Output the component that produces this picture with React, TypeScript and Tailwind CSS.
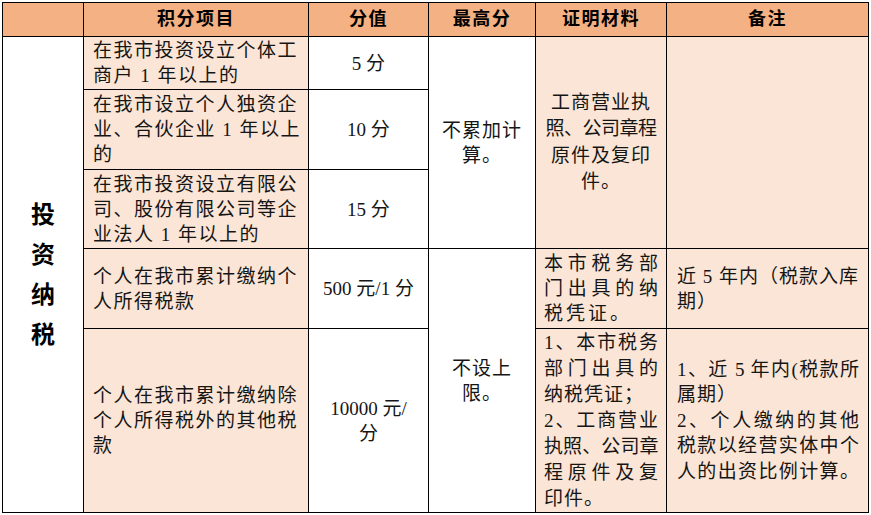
import clsx from 'clsx';
import type { ReactNode } from 'react';

const HEAD = 'bg-[#f4b183]';
const PEACH = 'bg-[#fbe5d6]';

function Ln({ children, j, className }: { children: ReactNode; j?: boolean; className?: string }) {
  return (
    <div className={clsx(j ? '[text-align-last:justify]' : 'whitespace-nowrap', className)}>
      {children}
    </div>
  );
}

const th = 'border border-black font-bold text-[18px] tracking-[1.5px] text-center text-black';
const td = 'border border-black align-middle';

export default function App() {
  return (
    <div className="bg-white w-[871px] h-[515px] pt-[2px] pl-[2px] font-['Liberation_Serif','Noto_Sans_CJK_SC',serif] text-[#151515]">
      <table className="table-fixed border-collapse w-[867px] text-[19px]">
        <colgroup>
          <col className="w-[81px]" />
          <col className="w-[225px]" />
          <col className="w-[120px]" />
          <col className="w-[107px]" />
          <col className="w-[131px]" />
          <col className="w-[202px]" />
        </colgroup>
        <thead>
          <tr className="h-[34px]">
            <th className={clsx(th, HEAD)}></th>
            <th className={clsx(th, HEAD)}>积分项目</th>
            <th className={clsx(th, HEAD)}>分值</th>
            <th className={clsx(th, HEAD)}>最高分</th>
            <th className={clsx(th, HEAD)}>证明材料</th>
            <th className={clsx(th, HEAD)}>备注</th>
          </tr>
        </thead>
        <tbody>
          {/* 投资设立 */}
          <tr className="h-[53px]">
            <td rowSpan={5} className={clsx(td, 'bg-white text-center text-[24px] font-bold leading-[40px] text-black')}>
              <div>投</div>
              <div>资</div>
              <div>纳</div>
              <div>税</div>
            </td>
            <td className={clsx(td, PEACH, 'pl-[9px] leading-[25px] tracking-[1.5px]')}>
              <Ln>在我市投资设立个体工</Ln>
              <Ln>商户 1 年以上的</Ln>
            </td>
            <td className={clsx(td, 'bg-white text-center leading-[25px]')}>5 分</td>
            <td rowSpan={3} className={clsx(td, 'bg-white text-center leading-[25px] tracking-[1px]')}>
              <Ln>不累加计</Ln>
              <Ln>算。</Ln>
            </td>
            <td rowSpan={3} className={clsx(td, PEACH, 'text-center leading-[26.5px] tracking-[1px]')}>
              <Ln>工商营业执</Ln>
              <Ln className="tracking-[-0.5px]">照、公司章程</Ln>
              <Ln>原件及复印</Ln>
              <Ln>件。</Ln>
            </td>
            <td rowSpan={3} className={clsx(td, PEACH)}></td>
          </tr>
          <tr className="h-[80px]">
            <td className={clsx(td, PEACH, 'pl-[9px] leading-[25px] tracking-[1.5px]')}>
              <Ln>在我市设立个人独资企</Ln>
              <Ln>业、合伙企业 1 年以上</Ln>
              <Ln>的</Ln>
            </td>
            <td className={clsx(td, 'bg-white text-center leading-[25px]')}>10 分</td>
          </tr>
          <tr className="h-[79px]">
            <td className={clsx(td, PEACH, 'pl-[9px] leading-[25px] tracking-[1.5px]')}>
              <Ln>在我市投资设立有限公</Ln>
              <Ln>司、股份有限公司等企</Ln>
              <Ln>业法人 1 年以上的</Ln>
            </td>
            <td className={clsx(td, 'bg-white text-center leading-[25px]')}>15 分</td>
          </tr>

          {/* 纳税 */}
          <tr className="h-[80px]">
            <td className={clsx(td, PEACH, 'pl-[9px] leading-[25px] tracking-[1.5px]')}>
              <Ln>个人在我市累计缴纳个</Ln>
              <Ln>人所得税款</Ln>
            </td>
            <td className={clsx(td, 'bg-white text-center leading-[25px]')}>500 元/1 分</td>
            <td rowSpan={2} className={clsx(td, 'bg-white text-center leading-[25px] tracking-[1px]')}>
              <Ln>不设上</Ln>
              <Ln>限。</Ln>
            </td>
            <td className={clsx(td, PEACH, 'px-[8px] leading-[25px]')}>
              <Ln j>本市税务部</Ln>
              <Ln j>门出具的纳</Ln>
              <Ln className="tracking-[3px]">税凭证。</Ln>
            </td>
            <td className={clsx(td, PEACH, 'pl-[10px] leading-[25px] tracking-[1px]')}>
              <Ln>近 5 年内（税款入库</Ln>
              <Ln>期）</Ln>
            </td>
          </tr>
          <tr className="h-[184px]">
            <td className={clsx(td, PEACH, 'pl-[9px] leading-[25px] tracking-[1.5px]')}>
              <Ln>个人在我市累计缴纳除</Ln>
              <Ln>个人所得税外的其他税</Ln>
              <Ln>款</Ln>
            </td>
            <td className={clsx(td, 'bg-white text-center leading-[25px]')}>
              <Ln>10000 元/</Ln>
              <Ln>分</Ln>
            </td>
            <td className={clsx(td, PEACH, 'px-[8px] leading-[26px]')}>
              <Ln j>1、本市税务</Ln>
              <Ln j>部门出具的</Ln>
              <Ln className="tracking-[1px]">纳税凭证；</Ln>
              <Ln j>2、工商营业</Ln>
              <Ln j className="tracking-[-0.5px]">执照、公司章</Ln>
              <Ln j>程原件及复</Ln>
              <Ln className="tracking-[1px]">印件。</Ln>
            </td>
            <td className={clsx(td, PEACH, 'pl-[10px] pr-[9px] leading-[25.5px]')}>
              <Ln j>1、近 5 年内(税款所</Ln>
              <Ln className="tracking-[1px]">属期）</Ln>
              <Ln j>2、个人缴纳的其他</Ln>
              <Ln j>税款以经营实体中个</Ln>
              <Ln j>人的出资比例计算。</Ln>
            </td>
          </tr>
        </tbody>
      </table>
    </div>
  );
}
